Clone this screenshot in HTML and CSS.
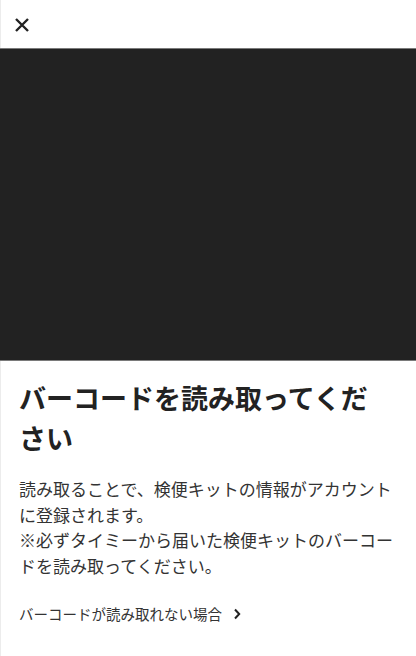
FILE: index.html
```html
<!DOCTYPE html>
<html lang="ja">
<head>
<meta charset="utf-8">
<title>バーコード読み取り</title>
<link rel="stylesheet" href="styles.css">
</head>
<body>
<div class="page">
  <header class="topbar">
    <button class="close" aria-label="閉じる">
      <svg width="16" height="16" viewBox="0 0 16 16"><path d="M2 2 L14 14 M14 2 L2 14" stroke="#222" stroke-width="2.4" stroke-linecap="butt" fill="none"/></svg>
    </button>
  </header>
  <div class="camera"></div>
  <main class="content">
    <h1 class="title">バーコードを読み取ってください</h1>
    <div class="texts">
      <p class="desc">読み取ることで、検便キットの情報がアカウントに登録されます。</p>
      <p class="desc">※必ずタイミーから届いた検便キットのバーコードを読み取ってください。</p>
    </div>
    <a class="help" href="#">バーコードが読み取れない場合
      <svg class="chev" width="8" height="12" viewBox="0 0 8 12"><path d="M2 1.5 L6.2 6 L2 10.5" stroke="#222" stroke-width="2" fill="none"/></svg>
    </a>
  </main>
</div>
</body>
</html>
```

FILE: styles.css
```css
* { box-sizing: border-box; }
html, body { margin: 0; padding: 0; background: #fff; }
body {
  font-family: "Noto Sans CJK JP", "Noto Sans", sans-serif;
  color: #222;
}
.page {
  min-height: 656px;
  box-shadow: inset 1px 0 #ececec;
}
.topbar {
  height: 48px;
  display: flex;
  align-items: center;
  padding-left: 14px;
}
.close {
  border: 0;
  background: none;
  padding: 0;
  width: 16px;
  height: 16px;
  margin-top: 2px;
  display: flex;
}
.camera {
  height: 313px;
  background: #222;
  border-top: 1px solid #7a7a7a;
  border-bottom: 1px solid #7a7a7a;
}
.content {
  padding: 17px 19px 0 19px;
}
.title {
  margin: 0 0 18px 0;
  max-width: 370px;
  font-size: 27px;
  line-height: 40px;
  font-weight: 700;
  color: #222;
}
.desc {
  margin: 0;
  font-size: 17px;
  line-height: 25.7px;
  color: #333;
}
.help {
  margin-top: 24px;
  display: flex;
  align-items: center;
  gap: 11px;
  font-size: 14.5px;
  line-height: 22px;
  color: #333;
  text-decoration: none;
}
.chev { display: block; }
```
